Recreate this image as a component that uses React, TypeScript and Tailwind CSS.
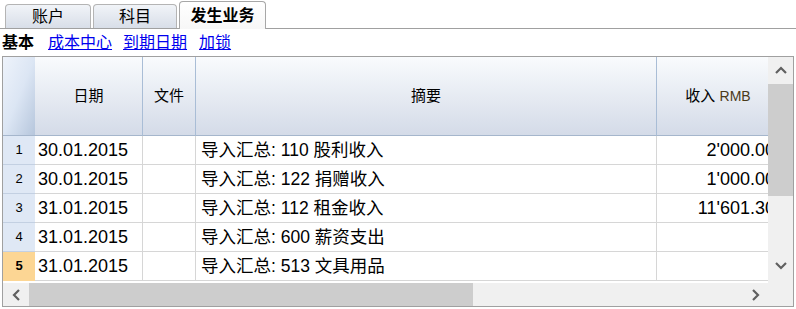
import React from 'react';

const rows = [
  { n: 1, date: '30.01.2015', text: '导入汇总: 110 股利收入', amount: "2'000.00" },
  { n: 2, date: '30.01.2015', text: '导入汇总: 122 捐赠收入', amount: "1'000.00" },
  { n: 3, date: '31.01.2015', text: '导入汇总: 112 租金收入', amount: "11'601.30" },
  { n: 4, date: '31.01.2015', text: '导入汇总: 600 薪资支出', amount: '' },
  { n: 5, date: '31.01.2015', text: '导入汇总: 513 文具用品', amount: '' },
];

const Chevron = ({ dir }: { dir: 'up' | 'down' | 'left' | 'right' }) => {
  const d = {
    up: 'M1 7 L6 2 L11 7',
    down: 'M1 2 L6 7 L11 2',
    left: 'M7 1 L2 6 L7 11',
    right: 'M2 1 L7 6 L2 11',
  }[dir];
  const vertical = dir === 'up' || dir === 'down';
  return (
    <svg
      width={vertical ? 12 : 9}
      height={vertical ? 9 : 12}
      viewBox={vertical ? '0 0 12 9' : '0 0 9 12'}
    >
      <path d={d} fill="none" stroke="#606060" strokeWidth={2.2} />
    </svg>
  );
};

const Tab = ({ label, active, w }: { label: string; active?: boolean; w: string }) =>
  active ? (
    <div
      className={`${w} h-[28px] -mb-px flex items-center justify-center rounded-t-[4px] border border-b-0 border-[#a7a7a7] bg-gradient-to-b from-white to-[#f7f7f7] text-[16px] font-bold text-black`}
    >
      {label}
    </div>
  ) : (
    <div
      className={`${w} h-[24px] flex items-center justify-center rounded-t-[4px] border border-b-0 border-[#b4b4b4] bg-gradient-to-b from-[#f1f4f8] to-[#d8dee8] text-[16px] text-black`}
    >
      {label}
    </div>
  );

const App = () => {
  return (
    <div className="w-[796px] h-[309px] bg-white overflow-hidden font-['Liberation_Sans','Noto_Sans_CJK_SC',sans-serif] text-black">
      {/* tabs */}
      <div className="h-[29px] flex items-end gap-[2px] pl-[5px] border-b border-[#a0a0a0]">
        <Tab label="账户" w="w-[86px]" />
        <Tab label="科目" w="w-[84px]" />
        <Tab label="发生业务" w="w-[87px]" active />
      </div>

      {/* views */}
      <div className="h-[27px] flex items-center pl-[2px] text-[16px]">
        <span className="font-bold mr-[14px]">基本</span>
        <a className="text-[#0000ee] underline mr-[11px]">成本中心</a>
        <a className="text-[#0000ee] underline mr-[12px]">到期日期</a>
        <a className="text-[#0000ee] underline">加锁</a>
      </div>

      {/* table */}
      <div className="mx-[2px] h-[251px] border border-[#a0a0a0] flex">
        <div className="w-[765px] flex flex-col">
          <div className="h-[226px] overflow-hidden">
            <div className="w-[774px] grid grid-cols-[32px_108px_53px_461px_120px]">
              {/* header */}
              <div className="h-[79px] bg-gradient-to-br from-[#eef3fb] via-[#dce6f4] to-[#b6c6dc] border-b border-[#a5b6cc]" />
              <div className="h-[79px] flex items-center justify-center text-[15px] bg-gradient-to-b from-[#f9fbfd] to-[#d4dbe8] border-b border-r border-b-[#a5b6cc] border-r-[#a9bdd6]">
                日期
              </div>
              <div className="h-[79px] flex items-center justify-center text-[15px] bg-gradient-to-b from-[#f9fbfd] to-[#d4dbe8] border-b border-r border-b-[#a5b6cc] border-r-[#a9bdd6]">
                文件
              </div>
              <div className="h-[79px] flex items-center justify-center text-[15px] bg-gradient-to-b from-[#f9fbfd] to-[#d4dbe8] border-b border-r border-b-[#a5b6cc] border-r-[#a9bdd6]">
                摘要
              </div>
              <div className="h-[79px] flex items-center justify-center text-[15px] bg-gradient-to-b from-[#f9fbfd] to-[#d4dbe8] border-b border-b-[#a5b6cc] pl-[2px]">
                收入&nbsp;<span className="text-[#4a3a1a] text-[14px]">RMB</span>
              </div>

              {rows.map((r) => (
                <React.Fragment key={r.n}>
                  <div
                    className={`h-[29px] flex items-center justify-center text-[13px] border-b ${
                      r.n === 5
                        ? 'bg-[#fcd694] font-bold border-[#fcd694]'
                        : 'bg-[#dfe8f5] border-[#c3d0e2]'
                    }`}
                  >
                    {r.n}
                  </div>
                  <div className="h-[29px] flex items-center pl-[3px] text-[18px] border-b border-r border-[#d6d6d6]">
                    {r.date}
                  </div>
                  <div className="h-[29px] border-b border-r border-[#d6d6d6]" />
                  <div className="h-[29px] flex items-center pl-[5px] text-[17.5px] border-b border-r border-[#d6d6d6] whitespace-nowrap">
                    {r.text}
                  </div>
                  <div className="h-[29px] flex items-center justify-end pr-[2px] text-[18px] border-b border-[#d6d6d6] whitespace-nowrap">
                    {r.amount}
                  </div>
                </React.Fragment>
              ))}
            </div>
          </div>

          {/* horizontal scrollbar */}
          <div className="h-[23px] bg-[#f0f0f0] flex items-stretch">
            <div className="w-[26px] flex items-center justify-center">
              <Chevron dir="left" />
            </div>
            <div className="w-[444px] bg-[#cdcdcd]" />
            <div className="flex-1" />
            <div className="w-[26px] flex items-center justify-center">
              <Chevron dir="right" />
            </div>
          </div>
        </div>

        {/* vertical scrollbar */}
        <div className="flex-1 bg-[#f0f0f0] flex flex-col">
          <div className="h-[27px] flex items-center justify-center">
            <Chevron dir="up" />
          </div>
          <div className="h-[112px] bg-[#cdcdcd]" />
          <div className="h-[56px]" />
          <div className="h-[27px] flex items-center justify-center">
            <Chevron dir="down" />
          </div>
        </div>
      </div>
    </div>
  );
};

export default App;
